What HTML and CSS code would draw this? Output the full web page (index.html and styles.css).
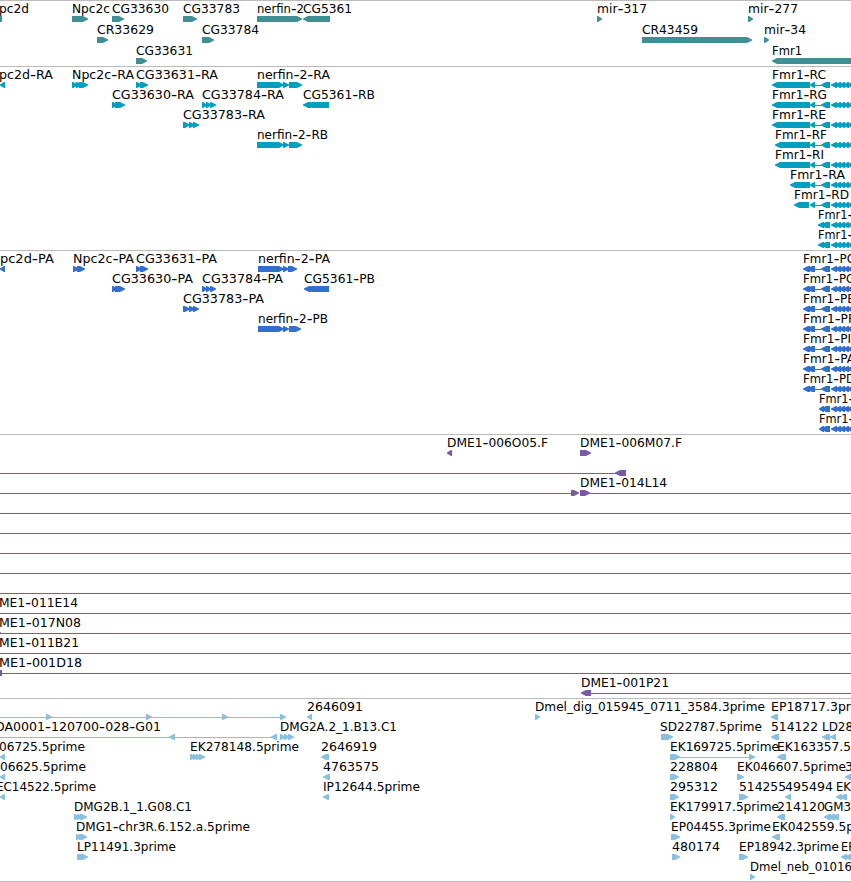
FILE: index.html
```html
<!DOCTYPE html>
<html lang="en">
<head>
    <meta charset="UTF-8">
    <meta name="viewport" content="width=device-width, initial-scale=1.0">
    <title>Genome Browser</title>
    <link rel="stylesheet" href="styles.css">
</head>
<body>
    <div class="browser">
        <svg class="track genes" id="genes" width="851" height="65"></svg>
        <svg class="track transcripts" id="transcripts" width="851" height="183"></svg>
        <svg class="track proteins" id="proteins" width="851" height="183"></svg>
        <svg class="track bacs" id="bacs" width="851" height="263"></svg>
        <svg class="track ests" id="ests" width="851" height="182"></svg>
    </div>
    <script src="tracks.js"></script>
</body>
</html>
```

FILE: styles.css
```css
body {
    margin: 0;
    background-color: #fff;
    overflow: hidden;
}
.browser {
    width: 851px;
    border-bottom: 1px solid #bbb;
}
.track {
    display: block;
    border-top: 1px solid #bbb;
    overflow: hidden;
}
.track text {
    font-family: "DejaVu Sans", sans-serif;
    font-size: 12px;
    fill: #000;
}
.track .dash {
    font-size: 16px;
}
.track rect {
    shape-rendering: crispEdges;
}
.genes {
    fill: #408f95;
}
.transcripts {
    fill: #009fc0;
}
.proteins {
    fill: #306fd0;
}
.bacs {
    fill: #785aa8;
}
.ests {
    fill: #89bfe0;
}
```

FILE: tracks.js
```js
const SVG_NS = 'http://www.w3.org/2000/svg';

// feature: [row, label, label start, label end, parts]
// parts: "start end kind", kind is > or < (arrow), = (box), - (intron line)
const fmrRest = ', 831 837 <, 835 841 <, 839 845 <, 843 849 <, 847 853 <';
const fmr = ', 815 821 -, 821 830 <' + fmrRest;

const genes = [
    [0, 'pc2d', -1, 29, '-4 2 ='],
    [0, 'Npc2c', 72, 110, '72 88 >'],
    [0, 'CG33630', 112, 169, '112 124 >'],
    [0, 'CG33783', 183, 240, '183 197 >'],
    [0, 'nerfin-2', 257, 304, '257 302 >'],
    [0, 'CG5361', 303, 352, '303 330 <'],
    [0, 'mir-317', 597, 647, '597 602 >'],
    [0, 'mir-277', 748, 798, '748 753 >'],
    [1, 'CR33629', 97, 154, '97 108 >'],
    [1, 'CG33784', 202, 259, '202 214 >'],
    [1, 'CR43459', 642, 698, '642 752 >'],
    [1, 'mir-34', 764, 806, '764 769 >'],
    [2, 'CG33631', 136, 193, '136 147 >'],
    [2, 'Fmr1', 772, 802, '772 860 <']
];

const transcripts = [
    [0, 'pc2d-RA', -1, 53, '0 5 <'],
    [0, 'Npc2c-RA', 72, 134, '72 78 >, 76 82 >, 79 88 >'],
    [0, 'CG33631-RA', 136, 218, '136 142 >, 140 148 >'],
    [0, 'nerfin-2-RA', 257, 330, '257 284 >, 283 289 >, 289 302 >'],
    [1, 'CG33630-RA', 112, 194, '112 117 >, 115 125 >'],
    [1, 'CG33784-RA', 202, 284, '202 207 >, 206 211 >, 210 216 >'],
    [1, 'CG5361-RB', 303, 375, '303 311 <, 307 329 <'],
    [2, 'CG33783-RA', 183, 265, '183 190 >, 189 195 >, 193 199 >'],
    [3, 'nerfin-2-RB', 257, 328, '257 284 >, 283 289 >, 289 302 >'],
    [0, 'Fmr1-RC', 772, 826, '772 810 <, 810 815 <' + fmr],
    [1, 'Fmr1-RG', 772, 827, '772 810 <, 810 815 <' + fmr],
    [2, 'Fmr1-RE', 772, 826, '772 810 <, 810 815 <' + fmr],
    [3, 'Fmr1-RF', 775, 827, '775 810 <, 810 815 <' + fmr],
    [4, 'Fmr1-RI', 775, 824, '775 810 <, 810 815 <' + fmr],
    [5, 'Fmr1-RA', 790, 845, '790 810 <, 810 815 <' + fmr],
    [6, 'Fmr1-RD', 794, 849, '794 809 <, 810 815 <' + fmr],
    [7, 'Fmr1-', 818, 853, '818 824 <, 821 830 <' + fmrRest],
    [8, 'Fmr1-', 818, 853, '818 824 <, 821 830 <' + fmrRest]
];

const proteins = [
    [0, 'pc2d-PA', 0, 54, '0 5 <'],
    [0, 'Npc2c-PA', 73, 134, '73 79 >, 77 85 >'],
    [0, 'CG33631-PA', 136, 217, '136 142 >, 140 148 >'],
    [0, 'nerfin-2-PA', 258, 330, '258 284 >, 283 289 >, 288 297 >'],
    [1, 'CG33630-PA', 112, 193, '112 117 >, 115 125 >'],
    [1, 'CG33784-PA', 202, 283, '202 207 >, 206 211 >, 210 216 >'],
    [1, 'CG5361-PB', 304, 375, '304 311 <, 307 329 <'],
    [2, 'CG33783-PA', 183, 264, '183 190 >, 189 195 >, 193 199 >'],
    [3, 'nerfin-2-PB', 258, 328, '258 284 >, 283 289 >, 289 301 >']
];
['C', 'G', 'E', 'F', 'I', 'A', 'D'].forEach((iso, row) => {
    proteins.push([row, 'Fmr1-P' + iso, 803, iso === 'I' ? 851 : 855, '803 810 <, 807 815 <' + fmr]);
});
proteins.push([7, 'Fmr1-', 819, 854, '819 824 <, 821 830 <' + fmrRest]);
proteins.push([8, 'Fmr1-', 819, 854, '819 824 <, 821 830 <' + fmrRest]);

const bacs = [
    [0, 'DME1-006O05.F', 447, 548, '447 452 <'],
    [0, 'DME1-006M07.F', 580, 682, '580 591 >'],
    [1, '', 0, 0, '0 618 -, 615 626 <'],
    [2, 'DME1-014L14', 580, 667, '0 572 -, 571 579 >, 580 590 >, 588 851 -'],
    [3, '', 0, 0, '0 851 -'],
    [4, '', 0, 0, '0 851 -'],
    [5, '', 0, 0, '0 851 -'],
    [6, '', 0, 0, '0 851 -'],
    [7, '', 0, 0, '0 851 -'],
    [8, 'ME1-011E14', -1, 78, '0 851 -'],
    [9, 'ME1-017N08', -1, 81, '0 851 -, -5 1 >'],
    [10, 'ME1-011B21', -1, 79, '0 851 -'],
    [11, 'ME1-001D18', -1, 82, '0 851 -, -4 2 ='],
    [12, 'DME1-001P21', 581, 669, '581 591 <, 590 851 -']
];

const ests = [
    [0, '', 0, 0, '0 282 -, 46 52 >, 146 152 >, 222 228 >, 280 286 >'],
    [0, '2646091', 307, 363, '307 312 <'],
    [0, 'Dmel_dig_015945_0711_3584.3prime', 535, 765, '535 540 >'],
    [0, 'EP18717.3pr', 771, 851, '771 778 <'],
    [1, 'DA0001-120700-028-G01', -5, 161, '0 273 -, 169 175 <, 271 277 <'],
    [1, 'DMG2A.2_1.B13.C1', 280, 397, '280 285 >, 284 289 >, 288 294 >'],
    [1, 'SD22787.5prime', 660, 762, '661 673 >'],
    [1, '514122', 771, 818, '771 779 <'],
    [1, 'LD28', 822, 853, '822 830 <, 830 836 <'],
    [2, '06725.5prime', -1, 85, '0 5 <'],
    [2, 'EK278148.5prime', 190, 299, '190 195 >, 193 198 >, 196 201 >, 199 205 >'],
    [2, '2646919', 321, 377, '321 329 <'],
    [2, 'EK169725.5prime', 670, 779, '670 680 >, 678 751 -, 749 755 >'],
    [2, 'EK163357.5', 777, 851, '777 786 <'],
    [3, '06625.5prime', 0, 86, '0 5 <'],
    [3, '4763575', 323, 379, '323 330 <'],
    [3, '228804', 670, 718, '670 679 >'],
    [3, 'EK046607.5prime', 737, 846, '737 744 >'],
    [3, '3', 845, 853, '845 853 <'],
    [4, 'EC14522.5prime', -4, 96, '0 5 <'],
    [4, 'IP12644.5prime', 323, 420, '323 329 <'],
    [4, '295312', 670, 718, '670 679 >'],
    [4, '514255', 739, 786, '739 748 >'],
    [4, '495494', 785, 833, '785 791 <'],
    [4, 'EK', 836, 851, '836 842 <, 840 847 <'],
    [5, 'DMG2B.1_1.G08.C1', 74, 192, '74 80 >, 77 83 >, 80 87 >'],
    [5, 'EK179917.5prime', 670, 779, '670 675 >'],
    [5, '214120', 777, 825, '777 785 <'],
    [5, 'GM3', 824, 851, '824 831 <, 828 835 <, 832 839 <'],
    [6, 'DMG1-chr3R.6.152.a.5prime', 76, 250, '76 82 >, 79 87 >'],
    [6, 'EP04455.3prime', 671, 771, '671 680 >'],
    [6, 'EK042559.5p', 772, 854, '772 780 <'],
    [7, 'LP11491.3prime', 77, 176, '77 83 >, 79 88 >'],
    [7, '480174', 672, 720, '672 680 >'],
    [7, 'EP18942.3prime', 739, 839, '739 748 >'],
    [7, 'EP', 841, 855, '841 847 <, 845 851 <'],
    [8, 'Dmel_neb_01016', 750, 852, '750 755 >']
];

function add(parent, name, attrs) {
    const el = document.createElementNS(SVG_NS, name);
    for (const key in attrs) {
        el.setAttribute(key, attrs[key]);
    }
    parent.appendChild(el);
    return el;
}

function drawPart(svg, part, top) {
    const [a, b, kind] = part.trim().split(' ');
    const x1 = Number(a);
    const x2 = Number(b);
    if (kind === '-') {
        add(svg, 'rect', { x: x1, y: top + 3, width: x2 - x1, height: 1 });
    } else if (kind === '=') {
        add(svg, 'rect', { x: x1, y: top, width: x2 - x1, height: 6 });
    } else {
        const head = Math.min(5, x2 - x1 - 1);
        // slightly blunt at the tip, flat at the tail
        const tip = kind === '>' ? x2 : x1;
        const tail = kind === '>' ? x1 : x2;
        const neck = kind === '>' ? x2 - head : x1 + head;
        add(svg, 'polygon', {
            points: `${tail},${top} ${neck},${top} ${tip},${top + 2.5} ${tip},${top + 3.5} ${neck},${top + 6} ${tail},${top + 6}`
        });
    }
}

function drawLabel(svg, label, start, end, baseline) {
    const text = add(svg, 'text', {
        x: start,
        y: baseline,
        textLength: end - start,
        lengthAdjust: 'spacingAndGlyphs'
    });
    // hyphens are drawn wider than the rest of the label and a bit lower
    let shift = 0;
    label.split(/(-)/).forEach(piece => {
        if (piece) {
            const dash = piece === '-';
            const target = dash ? 0.6 : 0;
            const span = add(text, 'tspan', { dy: target - shift });
            if (dash) {
                span.setAttribute('class', 'dash');
            }
            span.textContent = piece;
            shift = target;
        }
    });
}

function drawTrack(id, features, step) {
    const svg = document.getElementById(id);
    features.forEach(([row, label, start, end, parts]) => {
        const y = row * step;
        parts.split(',').forEach(part => drawPart(svg, part, y + 15));
        if (label) {
            drawLabel(svg, label, start, end, y + 12);
        }
    });
}

drawTrack('genes', genes, 21);
drawTrack('transcripts', transcripts, 20);
drawTrack('proteins', proteins, 20);
drawTrack('bacs', bacs, 20);
drawTrack('ests', ests, 20);
```
